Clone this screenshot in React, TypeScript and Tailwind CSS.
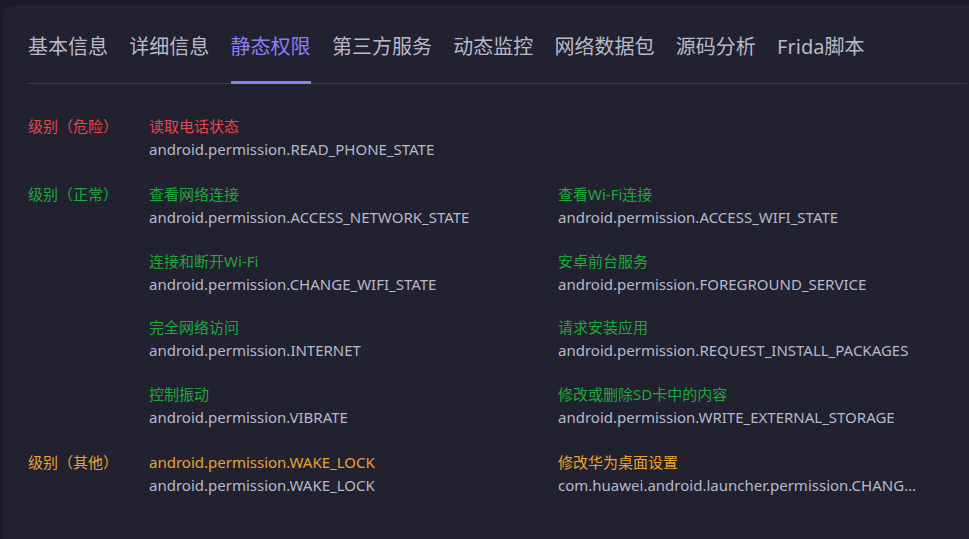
import React from "react";

const tabs = ["基本信息", "详细信息", "静态权限", "第三方服务", "动态监控", "网络数据包", "源码分析", "Frida脚本"];

type Item = { title: string; name: string };
type Group = { label: string; color: string; items: Item[] };

const groups: Group[] = [
  {
    label: "级别（危险）",
    color: "text-[#e2474d]",
    items: [{ title: "读取电话状态", name: "android.permission.READ_PHONE_STATE" }],
  },
  {
    label: "级别（正常）",
    color: "text-[#1fa83b]",
    items: [
      { title: "查看网络连接", name: "android.permission.ACCESS_NETWORK_STATE" },
      { title: "查看Wi-Fi连接", name: "android.permission.ACCESS_WIFI_STATE" },
      { title: "连接和断开Wi-Fi", name: "android.permission.CHANGE_WIFI_STATE" },
      { title: "安卓前台服务", name: "android.permission.FOREGROUND_SERVICE" },
      { title: "完全网络访问", name: "android.permission.INTERNET" },
      { title: "请求安装应用", name: "android.permission.REQUEST_INSTALL_PACKAGES" },
      { title: "控制振动", name: "android.permission.VIBRATE" },
      { title: "修改或删除SD卡中的内容", name: "android.permission.WRITE_EXTERNAL_STORAGE" },
    ],
  },
  {
    label: "级别（其他）",
    color: "text-[#e8a42f]",
    items: [
      { title: "android.permission.WAKE_LOCK", name: "android.permission.WAKE_LOCK" },
      { title: "修改华为桌面设置", name: "com.huawei.android.launcher.permission.CHANGE_HOME_SETTINGS" },
    ],
  },
];

export default function App() {
  return (
    <div
      className="w-[969px] h-[539px] overflow-hidden bg-[#1b1a26] pl-[3px] pt-[5px]"
      style={{ fontFamily: '"Noto Sans", "Noto Sans CJK SC", sans-serif' }}
    >
      <div className="h-[600px] w-[980px] rounded-tl-[10px] bg-[#22212f] pl-[25px] pt-[28px]">
        <div className="flex w-[939px] gap-[21.3px] border-b border-[#3d3c4b]">
          {tabs.map((t, i) => (
            <div
              key={t}
              className={
                "relative pb-[22px] text-[20px] leading-[28px] " +
                (i === 2 ? "text-[#8a80f6]" : "text-[#b8b9c7]")
              }
            >
              {t}
              {i === 2 && <span className="absolute bottom-[-1px] left-0 right-0 h-[3px] bg-[#8a80f6]" />}
            </div>
          ))}
        </div>
        <div className="mt-[31px] flex flex-col gap-[22px]">
          {groups.map((g) => (
            <div key={g.label} className="flex">
              <div className={"w-[121px] shrink-0 text-[15px] leading-[23px] " + g.color}>{g.label}</div>
              <div className="grid w-[773px] grid-cols-2 gap-x-[45px] gap-y-[20.7px]">
                {g.items.map((it) => (
                  <div key={it.name + it.title} className="min-w-0 text-[15px] leading-[23px]">
                    <div className={g.color}>{it.title}</div>
                    <div className="truncate text-[#b6b9cc]">{it.name}</div>
                  </div>
                ))}
              </div>
            </div>
          ))}
        </div>
      </div>
    </div>
  );
}
